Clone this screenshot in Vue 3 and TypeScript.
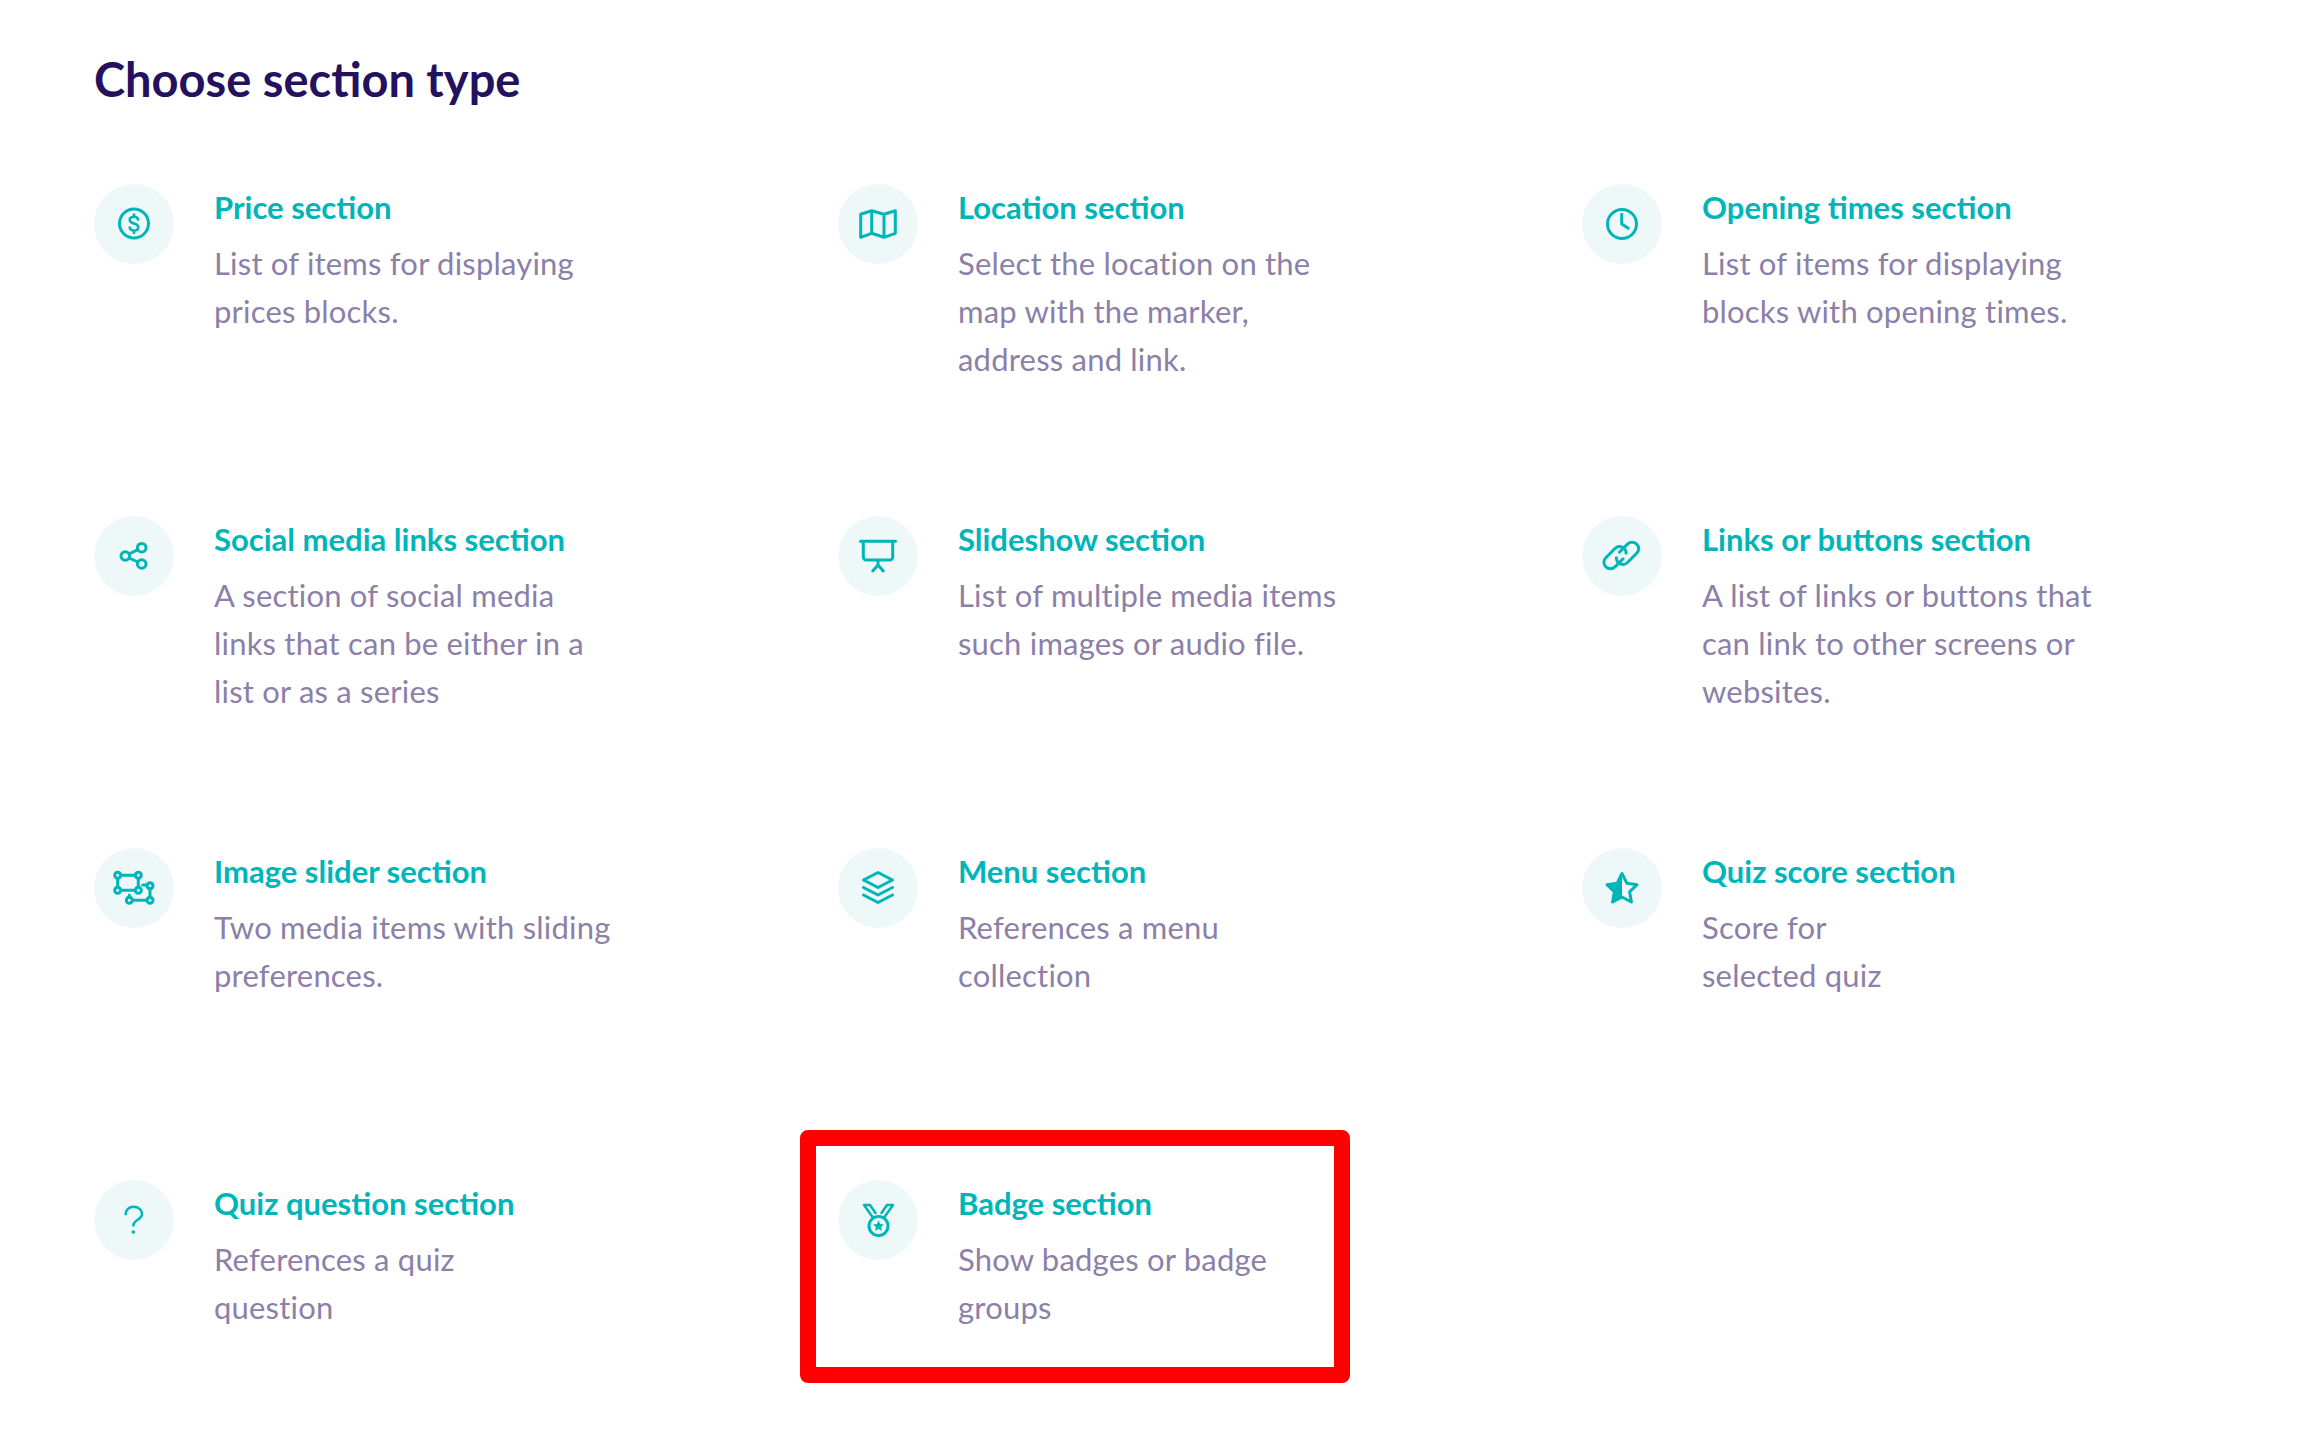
<script setup lang="ts">
interface Section {
  id: string
  title: string
  lines: string[]
  marked?: boolean
}

const sections: Section[] = [
  { id: 'price', title: 'Price section', lines: ['List of items for displaying', 'prices blocks.'] },
  { id: 'map', title: 'Location section', lines: ['Select the location on the', 'map with the marker,', 'address and link.'] },
  { id: 'clock', title: 'Opening times section', lines: ['List of items for displaying', 'blocks with opening times.'] },
  { id: 'share', title: 'Social media links section', lines: ['A section of social media', 'links that can be either in a', 'list or as a series'] },
  { id: 'slides', title: 'Slideshow section', lines: ['List of multiple media items', 'such images or audio file.'] },
  { id: 'links', title: 'Links or buttons section', lines: ['A list of links or buttons that', 'can link to other screens or', 'websites.'] },
  { id: 'slider', title: 'Image slider section', lines: ['Two media items with sliding', 'preferences.'] },
  { id: 'menu', title: 'Menu section', lines: ['References a menu', 'collection'] },
  { id: 'star', title: 'Quiz score section', lines: ['Score for', 'selected quiz'] },
  { id: 'question', title: 'Quiz question section', lines: ['References a quiz', 'question'] },
  { id: 'badge', title: 'Badge section', lines: ['Show badges or badge', 'groups'], marked: true },
]
</script>

<template>
  <main class="page">
    <h1 class="heading">Choose section type</h1>
    <section class="grid">
      <article v-for="s in sections" :key="s.id" class="item">
        <div class="disc">
          <svg class="icon" viewBox="0 0 48 48" fill="none" stroke="#00b5b8" stroke-width="3" stroke-linecap="round" stroke-linejoin="round">
            <template v-if="s.id === 'price'">
              <circle cx="24" cy="23.5" r="14.5" />
              <path stroke-width="2.6" d="M28.2 19.6c-.4-1.8-2-2.8-4.2-2.8-2.500 0-4.300 1.300-4.300 3.300 0 4.600 8.600 2.400 8.600 7.100 0 2-1.800 3.300-4.300 3.300-2.300 0-3.900-1-4.300-2.900M24 14.500v2.300M24 30.500v2.500" />
            </template>
            <template v-else-if="s.id === 'map'">
              <path d="M6.700 14.300 17.700 10.700 30 14.300 41.300 10.700V33.300L30 37.300 17.700 33.300 6.700 37.300ZM17.700 10.700V33.300M30 14.300V37.300" />
            </template>
            <template v-else-if="s.id === 'clock'">
              <circle cx="24" cy="24" r="14.500" />
              <path d="M23.700 14.300V24L30.300 28.300" />
            </template>
            <template v-else-if="s.id === 'share'">
              <circle cx="31.700" cy="15.700" r="4.300" />
              <circle cx="15.300" cy="24" r="4.300" />
              <circle cx="31.700" cy="32" r="4.300" />
              <path d="M19.200 22 27.800 17.700M19.200 26 27.800 30" />
            </template>
            <template v-else-if="s.id === 'slides'">
              <path d="M6.500 9.300H41.500M9.300 9.300V25a3 3 0 0 0 3 3H35.700a3 3 0 0 0 3-3V9.300M24 28V33M18.700 39 24 33 29.300 39" />
            </template>
            <template v-else-if="s.id === 'links'">
              <g transform="translate(17 25.700) rotate(-45)">
                <path d="M5 6.500H-6.500A6.500 6.500 0 0 1-6.500-6.500H6.500A6.500 6.500 0 0 1 11 4.700" />
              </g>
              <g transform="translate(29.500 21.300) rotate(-45)">
                <path d="M-5-6.500H6.500A6.500 6.500 0 0 1 6.500 6.500H-6.500A6.500 6.500 0 0 1-11-4.700" />
              </g>
            </template>
            <template v-else-if="s.id === 'slider'">
              <path d="M10.700 11.300H25.300M10.700 26.300H25.300M7.700 14.300V23.300M28.300 14.300V23.300M32.700 21H37M40 24.700V33.300M22.300 36.300H37M19.300 33.300V31" />
              <circle cx="7.700" cy="11.300" r="3" />
              <circle cx="28.300" cy="11.300" r="3" />
              <circle cx="7.700" cy="26.300" r="3" />
              <circle cx="28.300" cy="26.300" r="3" />
              <circle cx="40" cy="21.700" r="3" />
              <circle cx="19.300" cy="36.300" r="3" />
              <circle cx="40" cy="36.300" r="3" />
            </template>
            <template v-else-if="s.id === 'menu'">
              <path d="M24 8.500 38.500 16 24 23.500 9.500 16ZM9.500 23.500 24 31 38.500 23.500M9.500 31 24 38.500 38.500 31" />
            </template>
            <template v-else-if="s.id === 'star'">
              <path d="M24 9.500 28.800 19.200 39 20.700 31.600 27.800 33.400 38 24 33 14.600 38 16.400 27.800 9 20.700 19.200 19.200Z" />
              <path fill="#00b5b8" stroke="none" d="M24 9.500V33L14.600 38 16.400 27.800 9 20.700 19.200 19.200Z" />
            </template>
            <template v-else-if="s.id === 'question'">
              <path stroke-width="2.500" d="M15.700 18.300C15.700 13.800 19 10.800 23.500 10.800 28.500 10.800 32 14 32 18.200 32 23.500 23.300 24 23.300 29.500" />
              <circle cx="23.300" cy="36" r="1.800" fill="#00b5b8" stroke="none" />
            </template>
            <template v-else>
              <circle cx="24.500" cy="30" r="9.500" />
              <path fill="#00b5b8" stroke="none" d="M24.500 24.500 26.100 28.100 30 28.500 27.100 31.100 27.900 35 24.500 33 21.100 35 21.900 31.100 19 28.500 22.900 28.100Z" />
              <path stroke-width="2.500" d="M18.500 21 10 9H16L21.500 17M30.500 21 39 9H33L27.500 17" />
            </template>
          </svg>
        </div>
        <div class="copy">
          <h2 class="title">{{ s.title }}</h2>
          <p class="desc">
            <span v-for="line in s.lines" :key="line" class="line">{{ line }}</span>
          </p>
        </div>
        <div v-if="s.marked" class="mark"></div>
      </article>
    </section>
  </main>
</template>

<style scoped>
.page {
  box-sizing: border-box;
  width: 2300px;
  min-height: 1444px;
  padding: 48px 0 0 94px;
  background: #fff;
  font-family: "Lato", "Liberation Sans", sans-serif;
}
.heading {
  margin: 0;
  height: 62px;
  font-size: 47px;
  line-height: 62px;
  font-weight: 700;
  color: #24125f;
}
.grid {
  display: grid;
  grid-template-columns: repeat(3, 744px);
  grid-auto-rows: 332px;
  margin-top: 74px;
}
.item {
  position: relative;
  display: flex;
  align-items: flex-start;
  gap: 40px;
}
.disc {
  display: flex;
  align-items: center;
  justify-content: center;
  flex: none;
  width: 80px;
  height: 80px;
  border-radius: 50%;
  background: #eef8f9;
}
.icon {
  width: 48px;
  height: 48px;
}
.copy {
  margin-top: -1px;
}
.title {
  margin: 0;
  font-size: 31px;
  line-height: 48px;
  font-weight: 700;
  color: #00b5b8;
  white-space: nowrap;
}
.desc {
  margin: 8px 0 0;
  font-size: 31px;
  line-height: 48px;
  letter-spacing: 0.2px;
  color: #8c80a8;
}
.line {
  display: block;
  white-space: nowrap;
}
.mark {
  position: absolute;
  left: -38px;
  top: -50px;
  box-sizing: border-box;
  width: 550px;
  height: 253px;
  border: 16px solid #ff0000;
  border-radius: 8px;
  pointer-events: none;
}
</style>
